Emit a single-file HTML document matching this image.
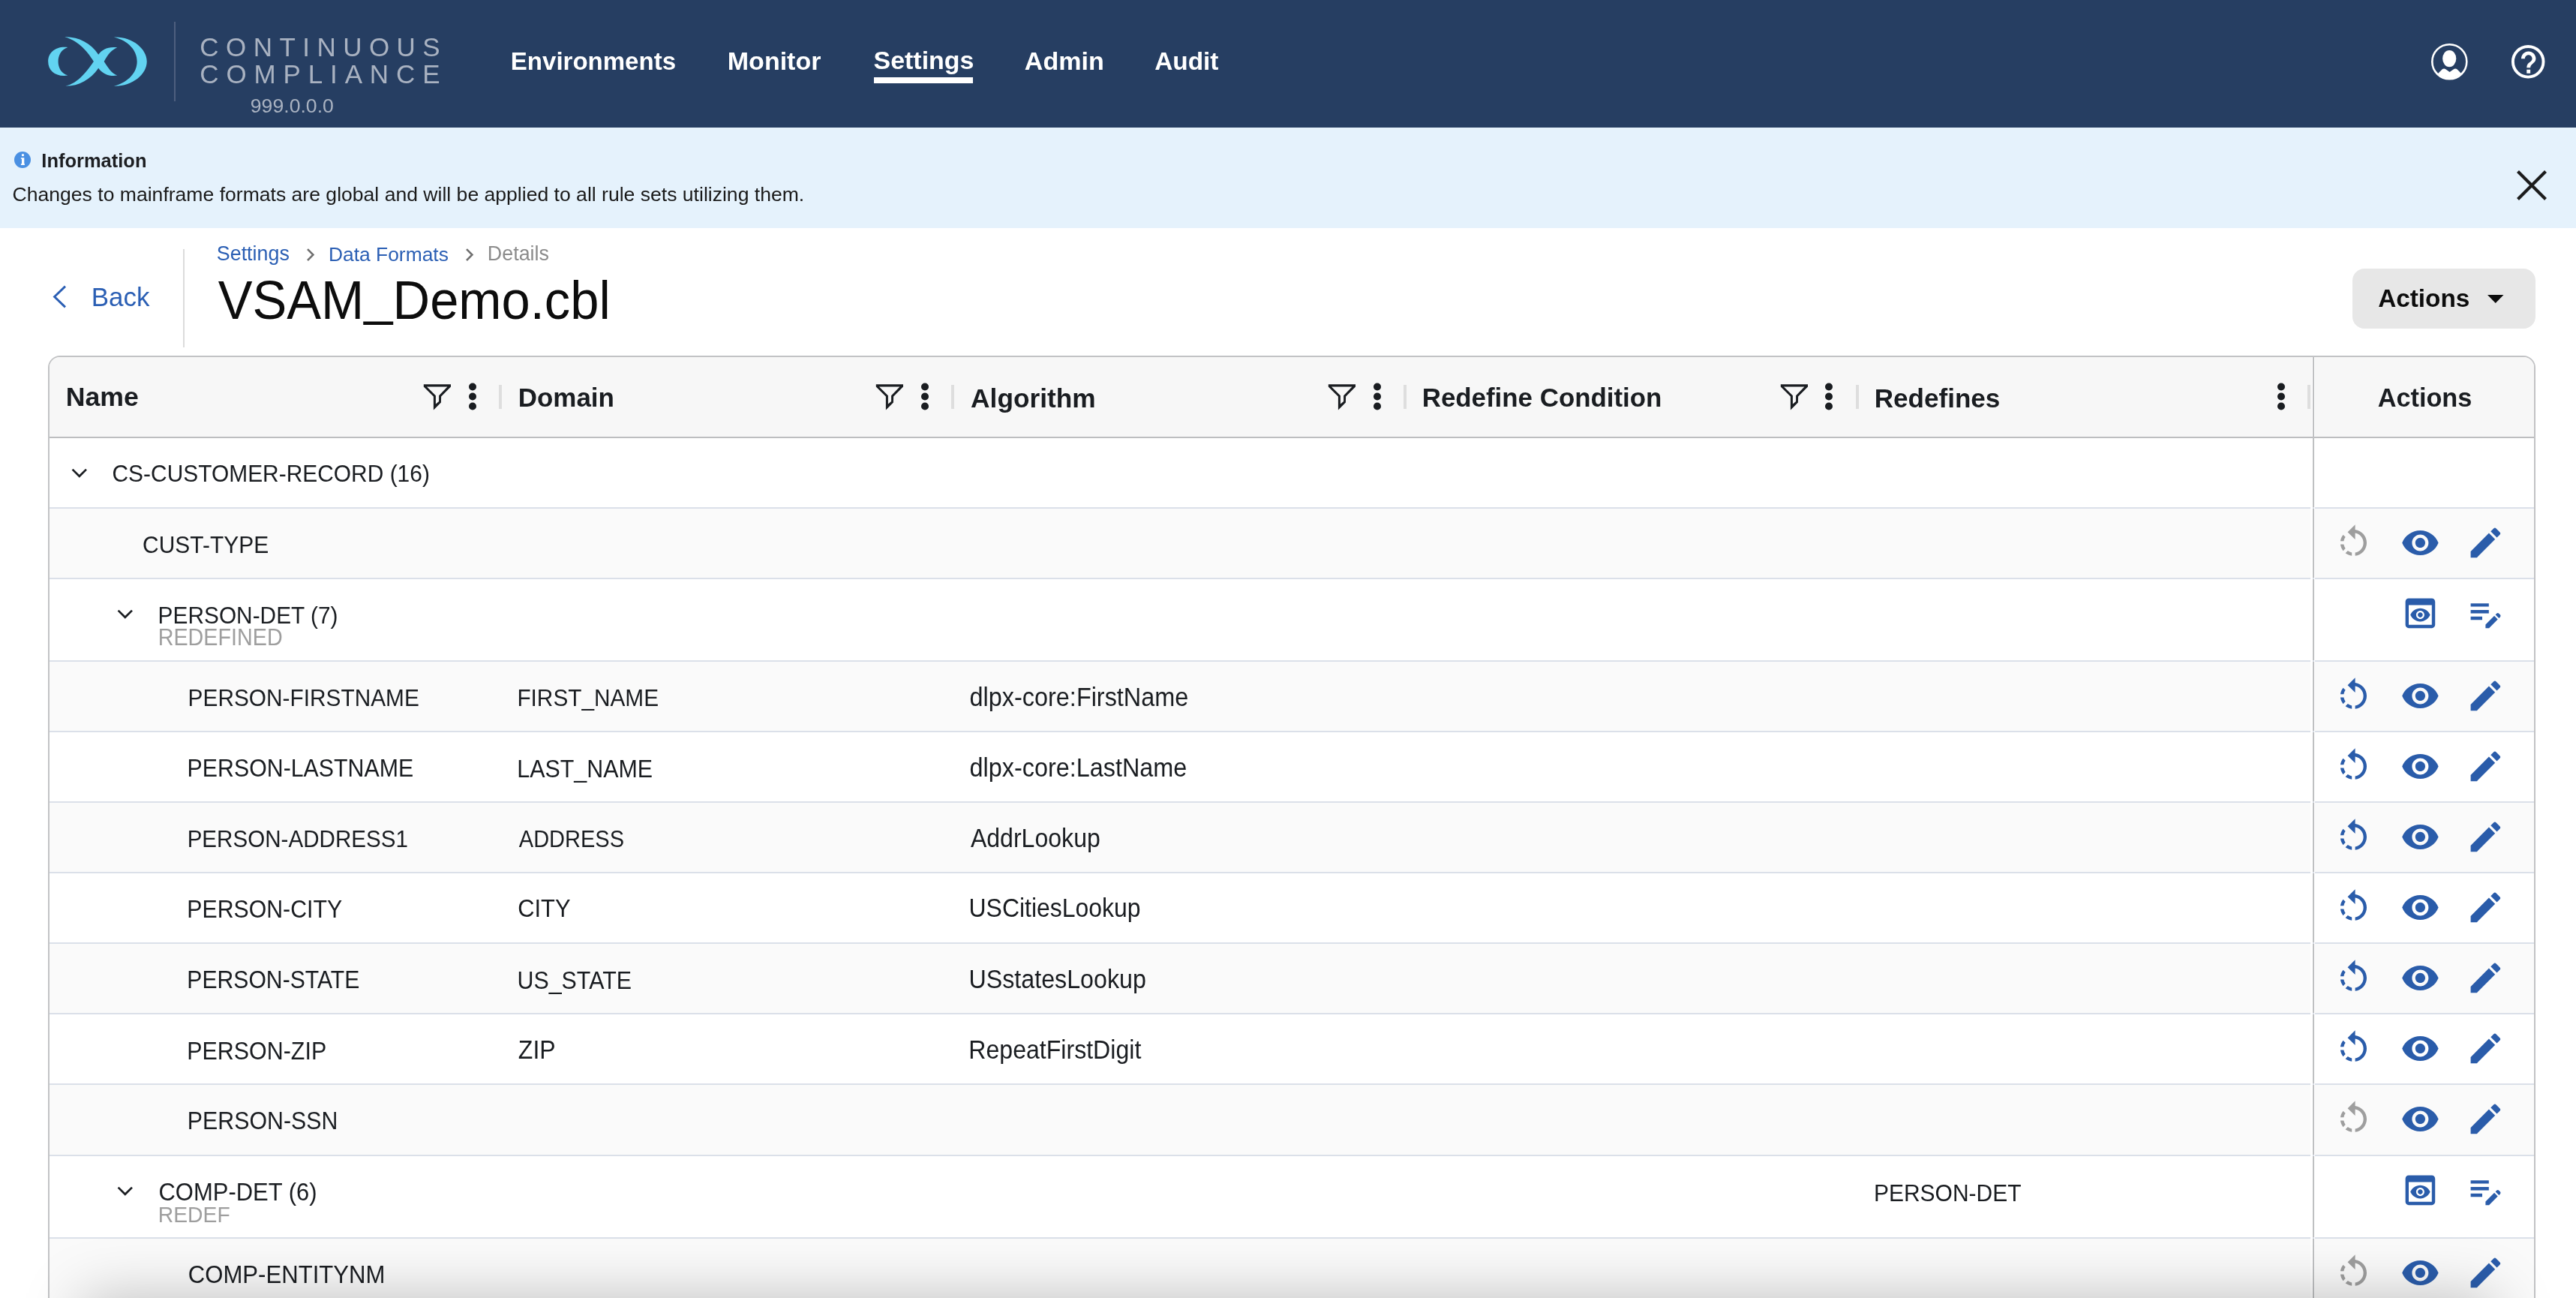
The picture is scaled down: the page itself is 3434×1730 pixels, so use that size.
<!DOCTYPE html>
<html><head><meta charset="utf-8"><style>
html,body{margin:0;padding:0;background:#fff;overflow:hidden;}
@media (max-width:2000px){#root{zoom:0.5;}}
#root{position:relative;will-change:transform;-webkit-font-smoothing:antialiased;width:3434px;height:1730px;overflow:hidden;background:#fff;font-family:"Liberation Sans",sans-serif;}
.t{position:absolute;white-space:nowrap;}
</style></head><body><div id="root">
<div style="position:absolute;left:0px;top:0px;width:3434px;height:170px;background:#263e62"></div>
<svg style="position:absolute;left:55px;top:40px" width="150" height="85" viewBox="0 0 2291 1298"><g fill="#62d3f1">
<path d="M540,350 C300,320 140,450 140,640 C140,830 300,960 540,925 C400,880 345,760 345,640 C345,520 400,400 540,350 Z"/>
<path d="M1480,145 C1850,130 2150,380 2150,640 C2150,900 1850,1150 1480,1140 C1780,1060 1950,860 1950,640 C1950,420 1780,220 1480,145 Z"/>
</g></svg>
<svg style="position:absolute;left:85px;top:45px" width="80" height="75" viewBox="0 0 1385 1298"><path fill="#62d3f1" d="M20,75 C300,60 620,200 800,480 C880,370 1020,290 1235,318 C1110,360 1010,480 930,640 C1010,760 1100,920 1235,960 C1080,990 900,940 800,790 C620,1060 330,1210 40,1205 C330,1150 570,820 690,640 C580,460 360,160 20,75 Z"/></svg>
<div style="position:absolute;left:232px;top:29px;width:2px;height:106px;background:#4d5f7e"></div>
<div class="t" style="left:266.25px;top:45.37px;font-size:35.00px;line-height:35.00px;color:#a9b2c1;letter-spacing:9.46px;">CONTINUOUS</div>
<div class="t" style="left:266.25px;top:80.87px;font-size:35.00px;line-height:35.00px;color:#a9b2c1;letter-spacing:9.87px;">COMPLIANCE</div>
<div class="t" style="left:333.80px;top:128.44px;font-size:26.65px;line-height:26.65px;color:#a9b2c1;">999.0.0.0</div>
<div class="t" style="left:680.85px;top:65.04px;font-size:33.02px;line-height:33.02px;font-weight:700;color:#fff;">Environments</div>
<div class="t" style="left:969.79px;top:64.19px;font-size:34.03px;line-height:34.03px;font-weight:700;color:#fff;">Monitor</div>
<div class="t" style="left:1164.58px;top:64.29px;font-size:33.91px;line-height:33.91px;font-weight:700;color:#fff;">Settings</div>
<div class="t" style="left:1365.85px;top:64.20px;font-size:34.02px;line-height:34.02px;font-weight:700;color:#fff;">Admin</div>
<div class="t" style="left:1539.17px;top:64.72px;font-size:33.40px;line-height:33.40px;font-weight:700;color:#fff;">Audit</div>
<div style="position:absolute;left:1165px;top:103px;width:132px;height:8px;background:#fff"></div>
<svg style="position:absolute;left:3235px;top:52px" width="60" height="60" viewBox="3235 52 60 60">
<defs><clipPath id="uc"><circle cx="3265.3" cy="82.2" r="22.2"/></clipPath></defs>
<circle cx="3265.3" cy="82.2" r="23" fill="none" stroke="#fff" stroke-width="2.6"/>
<ellipse cx="3265.2" cy="78.1" rx="9.1" ry="11.1" fill="#fff"/>
<path clip-path="url(#uc)" d="M3247,101 L3255.5,92.6 Q3257.9,90.4 3260.3,92.3 L3265.6,96 L3270.9,92.3 Q3273.3,90.4 3275.7,92.6 L3284,101 L3292,112 L3238,112 Z" fill="#fff"/>
</svg>
<svg style="position:absolute;left:3340px;top:52px" width="60" height="60" viewBox="3340 52 60 60">
<circle cx="3370.2" cy="82.3" r="20.3" fill="none" stroke="#fff" stroke-width="3.9"/>
<g transform="translate(3361,68.5) scale(2.43) translate(-8,-6)"><path fill="#fff" d="M11 18h2v-2h-2v2zM12 6c-2.21 0-4 1.79-4 4h2c0-1.1.9-2 2-2s2 .9 2 2c0 2-3 1.75-3 5h2c0-2.250 3-2.5 3-5 0-2.21-1.790-4-4-4z"/></g>
</svg>
<div style="position:absolute;left:0px;top:170px;width:3434px;height:134px;background:#e5f2fc"></div>
<svg style="position:absolute;left:18px;top:201px" width="24" height="24" viewBox="0 0 24 24"><circle cx="12" cy="12" r="11" fill="#4a90e2"/><g transform="translate(-18,-201)" fill="#fff"><rect x="29" y="205.3" width="2.9" height="2.8"/><path d="M27.9,210.3 L32.3,210.3 L32.3,218.3 L32.9,218.3 L32.9,220 L27.9,220 L27.9,218.3 L29,218.3 L29,211.7 L27.9,211.7 Z"/></g></svg>
<div class="t" style="left:55.34px;top:202.42px;font-size:25.49px;line-height:25.49px;font-weight:700;color:#1d1f22;">Information</div>
<div class="t" style="left:16.57px;top:245.81px;font-size:26.57px;line-height:26.57px;color:#1a1a1a;">Changes to mainframe formats are global and will be applied to all rule sets utilizing them.</div>
<svg style="position:absolute;left:3350px;top:222px" width="50" height="50" viewBox="3350 222 50 50"><path d="M3356.5,228.5 L3393.5,265.5 M3393.5,228.5 L3356.5,265.5" stroke="#1c1c1c" stroke-width="4.2" fill="none"/></svg>
<svg style="position:absolute;left:60px;top:375px" width="40" height="42" viewBox="60 375 40 42"><path d="M87,381.6 L72.6,395.5 L87,409.4" stroke="#2b5fb4" stroke-width="2.9" fill="none"/></svg>
<div class="t" style="left:121.70px;top:379.40px;font-size:34.97px;line-height:34.97px;color:#2b5fb4;">Back</div>
<div style="position:absolute;left:243.5px;top:332px;width:2px;height:131px;background:#dcdcdc"></div>
<div class="t" style="left:288.79px;top:325.25px;font-size:26.87px;line-height:26.87px;color:#2b5fb4;">Settings</div>
<div class="t" style="left:437.89px;top:325.62px;font-size:26.43px;line-height:26.43px;color:#2b5fb4;">Data Formats</div>
<div class="t" style="left:649.85px;top:325.25px;font-size:26.87px;line-height:26.87px;color:#8c8c8c;">Details</div>
<svg style="position:absolute;left:403.6px;top:328px" width="20" height="24" viewBox="403.6 328 20 24"><path d="M409.6,332.2 L417.0,339.6 L409.6,347" stroke="#707070" stroke-width="2.6" fill="none"/></svg>
<svg style="position:absolute;left:615.5px;top:328px" width="20" height="24" viewBox="615.5 328 20 24"><path d="M621.5,332.2 L628.9,339.6 L621.5,347" stroke="#707070" stroke-width="2.6" fill="none"/></svg>
<div class="t" style="left:290.66px;top:368.33px;font-size:68.70px;line-height:68.70px;color:#0d0d0d;transform:scaleY(1.04);transform-origin:0 58.17px;">VSAM<span style="position:relative;top:-6.5px">_</span>Demo.cbl</div>
<div style="position:absolute;left:3136px;top:358px;width:244px;height:80px;background:#e7e7e7;border-radius:16px"></div>
<div class="t" style="left:3170.17px;top:380.78px;font-size:33.33px;line-height:33.33px;font-weight:700;color:#0d0d0d;">Actions</div>
<svg style="position:absolute;left:3310px;top:388px" width="34" height="22" viewBox="3310 388 34 22"><path d="M3316,393 L3337.5,393 L3326.75,404 Z" fill="#0d0d0d"/></svg>
<div style="position:absolute;left:64px;top:474px;width:3316px;height:1400px;border:2px solid #c2c3c5;border-radius:16px;box-sizing:border-box;overflow:hidden;background:#fff">
<div style="position:absolute;left:0px;top:0px;width:3316px;height:106px;background:#f7f7f7"></div>
<div style="position:absolute;left:0px;top:106px;width:3316px;height:2px;background:#bdbec0"></div>
<div style="position:absolute;left:0px;top:108px;width:3316px;height:93px;background:#ffffff"></div>
<div style="position:absolute;left:0px;top:201px;width:3316px;height:94px;background:#fafafa"></div>
<div style="position:absolute;left:0px;top:295px;width:3316px;height:110px;background:#ffffff"></div>
<div style="position:absolute;left:0px;top:405px;width:3316px;height:94px;background:#fafafa"></div>
<div style="position:absolute;left:0px;top:499px;width:3316px;height:94px;background:#ffffff"></div>
<div style="position:absolute;left:0px;top:593px;width:3316px;height:94px;background:#fafafa"></div>
<div style="position:absolute;left:0px;top:687px;width:3316px;height:94px;background:#ffffff"></div>
<div style="position:absolute;left:0px;top:781px;width:3316px;height:94px;background:#fafafa"></div>
<div style="position:absolute;left:0px;top:875px;width:3316px;height:94px;background:#ffffff"></div>
<div style="position:absolute;left:0px;top:969px;width:3316px;height:95px;background:#fafafa"></div>
<div style="position:absolute;left:0px;top:1064px;width:3316px;height:110px;background:#ffffff"></div>
<div style="position:absolute;left:0px;top:1174px;width:3316px;height:150px;background:#fafafa"></div>
<div style="position:absolute;left:0px;top:200px;width:3316px;height:2px;background:#dbe0e9"></div>
<div style="position:absolute;left:0px;top:294px;width:3316px;height:2px;background:#dbe0e9"></div>
<div style="position:absolute;left:0px;top:404px;width:3316px;height:2px;background:#dbe0e9"></div>
<div style="position:absolute;left:0px;top:498px;width:3316px;height:2px;background:#dbe0e9"></div>
<div style="position:absolute;left:0px;top:592px;width:3316px;height:2px;background:#dbe0e9"></div>
<div style="position:absolute;left:0px;top:686px;width:3316px;height:2px;background:#dbe0e9"></div>
<div style="position:absolute;left:0px;top:780px;width:3316px;height:2px;background:#dbe0e9"></div>
<div style="position:absolute;left:0px;top:874px;width:3316px;height:2px;background:#dbe0e9"></div>
<div style="position:absolute;left:0px;top:968px;width:3316px;height:2px;background:#dbe0e9"></div>
<div style="position:absolute;left:0px;top:1063px;width:3316px;height:2px;background:#dbe0e9"></div>
<div style="position:absolute;left:0px;top:1173px;width:3316px;height:2px;background:#dbe0e9"></div>
<div style="position:absolute;left:3016px;top:0px;width:1px;height:106px;background:#ffffff"></div>
<div style="position:absolute;left:3019px;top:0px;width:1px;height:106px;background:#ffffff"></div>
<div style="position:absolute;left:3017px;top:0px;width:2px;height:108px;background:#bfc0c2"></div>
<div style="position:absolute;left:3014px;top:108px;width:3px;height:1400px;background:#ffffff"></div>
<div style="position:absolute;left:3019px;top:108px;width:1px;height:1400px;background:#ffffff"></div>
<div style="position:absolute;left:3017px;top:108px;width:2px;height:91.5px;background:#bfc0c2"></div>
<div style="position:absolute;left:3017px;top:202px;width:2px;height:91.5px;background:#bfc0c2"></div>
<div style="position:absolute;left:3017px;top:296px;width:2px;height:107.5px;background:#bfc0c2"></div>
<div style="position:absolute;left:3017px;top:406px;width:2px;height:91.5px;background:#bfc0c2"></div>
<div style="position:absolute;left:3017px;top:500px;width:2px;height:91.5px;background:#bfc0c2"></div>
<div style="position:absolute;left:3017px;top:594px;width:2px;height:91.5px;background:#bfc0c2"></div>
<div style="position:absolute;left:3017px;top:688px;width:2px;height:91.5px;background:#bfc0c2"></div>
<div style="position:absolute;left:3017px;top:782px;width:2px;height:91.5px;background:#bfc0c2"></div>
<div style="position:absolute;left:3017px;top:876px;width:2px;height:91.5px;background:#bfc0c2"></div>
<div style="position:absolute;left:3017px;top:970px;width:2px;height:92.5px;background:#bfc0c2"></div>
<div style="position:absolute;left:3017px;top:1065px;width:2px;height:107.5px;background:#bfc0c2"></div>
<div style="position:absolute;left:3017px;top:1175px;width:2px;height:149px;background:#bfc0c2"></div>
</div>
<div class="t" style="left:87.68px;top:512.28px;font-size:35.70px;line-height:35.70px;font-weight:700;color:#1a1d21;">Name</div>
<svg style="position:absolute;left:557.4px;top:505px" width="50" height="50" viewBox="557.4 505 50 50"><path fill-rule="evenodd" fill="#1a1d21" d="M565.2,512.3 L601.4,512.3 L601.4,515.5 L588.5,528.6 L588.3,536.4 L578.3,546.6 L578.3,528.6 L565.2,515.5 Z M569.4,515.5 L596.8,515.5 L585.5,527.3 L585.5,535.0 L581.3,538.6 L581.3,527.3 Z"/></svg>
<svg style="position:absolute;left:624.1px;top:509px" width="12" height="40" viewBox="0 0 12 40"><circle cx="6" cy="6.5" r="5" fill="#1a1d21"/><circle cx="6" cy="19.5" r="5" fill="#1a1d21"/><circle cx="6" cy="32.5" r="5" fill="#1a1d21"/></svg>
<div style="position:absolute;left:665.4px;top:513px;width:4px;height:32px;background:#dedede"></div>
<div class="t" style="left:690.73px;top:512.89px;font-size:34.97px;line-height:34.97px;font-weight:700;color:#1a1d21;">Domain</div>
<svg style="position:absolute;left:1160.1px;top:505px" width="50" height="50" viewBox="1160.1 505 50 50"><path fill-rule="evenodd" fill="#1a1d21" d="M1167.9,512.3 L1204.1,512.3 L1204.1,515.5 L1191.2,528.6 L1191.0,536.4 L1181.0,546.6 L1181.0,528.6 L1167.9,515.5 Z M1172.1,515.5 L1199.5,515.5 L1188.2,527.3 L1188.2,535.0 L1184.0,538.6 L1184.0,527.3 Z"/></svg>
<svg style="position:absolute;left:1226.8px;top:509px" width="12" height="40" viewBox="0 0 12 40"><circle cx="6" cy="6.5" r="5" fill="#1a1d21"/><circle cx="6" cy="19.5" r="5" fill="#1a1d21"/><circle cx="6" cy="32.5" r="5" fill="#1a1d21"/></svg>
<div style="position:absolute;left:1268.1px;top:513px;width:4px;height:32px;background:#dedede"></div>
<div class="t" style="left:1294.12px;top:512.63px;font-size:35.28px;line-height:35.28px;font-weight:700;color:#1a1d21;">Algorithm</div>
<svg style="position:absolute;left:1762.8px;top:505px" width="50" height="50" viewBox="1762.8 505 50 50"><path fill-rule="evenodd" fill="#1a1d21" d="M1770.6,512.3 L1806.8,512.3 L1806.8,515.5 L1793.9,528.6 L1793.7,536.4 L1783.7,546.6 L1783.7,528.6 L1770.6,515.5 Z M1774.8,515.5 L1802.2,515.5 L1790.9,527.3 L1790.9,535.0 L1786.7,538.6 L1786.7,527.3 Z"/></svg>
<svg style="position:absolute;left:1829.5px;top:509px" width="12" height="40" viewBox="0 0 12 40"><circle cx="6" cy="6.5" r="5" fill="#1a1d21"/><circle cx="6" cy="19.5" r="5" fill="#1a1d21"/><circle cx="6" cy="32.5" r="5" fill="#1a1d21"/></svg>
<div style="position:absolute;left:1870.8px;top:513px;width:4px;height:32px;background:#dedede"></div>
<div class="t" style="left:1895.73px;top:512.96px;font-size:34.89px;line-height:34.89px;font-weight:700;color:#1a1d21;">Redefine Condition</div>
<svg style="position:absolute;left:2365.5px;top:505px" width="50" height="50" viewBox="2365.5 505 50 50"><path fill-rule="evenodd" fill="#1a1d21" d="M2373.3,512.3 L2409.5,512.3 L2409.5,515.5 L2396.6,528.6 L2396.4,536.4 L2386.4,546.6 L2386.4,528.6 L2373.3,515.5 Z M2377.5,515.5 L2404.9,515.5 L2393.6,527.3 L2393.6,535.0 L2389.4,538.6 L2389.4,527.3 Z"/></svg>
<svg style="position:absolute;left:2432.2px;top:509px" width="12" height="40" viewBox="0 0 12 40"><circle cx="6" cy="6.5" r="5" fill="#1a1d21"/><circle cx="6" cy="19.5" r="5" fill="#1a1d21"/><circle cx="6" cy="32.5" r="5" fill="#1a1d21"/></svg>
<div style="position:absolute;left:2473.5px;top:513px;width:4px;height:32px;background:#dedede"></div>
<div class="t" style="left:2498.72px;top:512.80px;font-size:35.08px;line-height:35.08px;font-weight:700;color:#1a1d21;">Redefines</div>
<svg style="position:absolute;left:3034.9px;top:509px" width="12" height="40" viewBox="0 0 12 40"><circle cx="6" cy="6.5" r="5" fill="#1a1d21"/><circle cx="6" cy="19.5" r="5" fill="#1a1d21"/><circle cx="6" cy="32.5" r="5" fill="#1a1d21"/></svg>
<div style="position:absolute;left:3076.2px;top:513px;width:4px;height:32px;background:#dedede"></div>
<div class="t" style="left:3169.64px;top:513.45px;font-size:34.31px;line-height:34.31px;font-weight:700;color:#1a1d21;">Actions</div>
<svg style="position:absolute;left:92px;top:621px" width="28" height="20" viewBox="0 0 28 20"><path d="M4.6,4.6 L13.8,13.8 L23.0,4.6" fill="none" stroke="#1a1d21" stroke-width="2.7"/></svg>
<div class="t" style="left:149.50px;top:616.66px;font-size:29.93px;line-height:29.93px;color:#1a1d21;transform:scaleY(1.07);transform-origin:0 25.34px;">CS-CUSTOMER-RECORD (16)</div>
<div class="t" style="left:190.00px;top:712.11px;font-size:29.98px;line-height:29.98px;color:#1a1d21;transform:scaleY(1.07);transform-origin:0 25.39px;">CUST-TYPE</div>
<svg style="position:absolute;left:3111.0px;top:697.0px" width="52.8" height="52.8" viewBox="0 0 24 24"><path fill="#9e9e9e" d="M7.11 8.53 5.7 7.11C4.8 8.27 4.24 9.61 4.07 11h2.02c.14-.87.49-1.72 1.02-2.470zM6.09 13H4.07c.17 1.39.72 2.73 1.62 3.89l1.41-1.42c-.52-.75-.87-1.59-1.01-2.47zm1.01 5.32c1.16.9 2.51 1.44 3.9 1.61V17.9c-.87-.15-1.71-.49-2.46-1.03L7.1 18.32zM13 4.07V1L8.45 5.55 13 10V6.09c2.84.48 5 2.94 5 5.91s-2.16 5.43-5 5.91v2.02c3.95-.49 7-3.850 7-7.93s-3.05-7.44-7-7.93z"/></svg>
<svg style="position:absolute;left:3199.5px;top:697.0px" width="52.8" height="52.8" viewBox="0 0 24 24"><path fill="#2a5caa" d="M12 4.5C7 4.5 2.73 7.61 1 12c1.73 4.39 6 7.5 11 7.5s9.27-3.11 11-7.5c-1.73-4.39-6-7.5-11-7.5zM12 17c-2.76 0-5-2.240-5-5s2.24-5 5-5 5 2.24 5 5-2.24 5-5 5zm0-8c-1.66 0-3 1.34-3 3s1.34 3 3 3 3-1.34 3-3-1.34-3-3-3z"/></svg>
<svg style="position:absolute;left:3287.3px;top:697.0px" width="52.8" height="52.8" viewBox="0 0 24 24"><path fill="#2a5caa" d="M3 17.25V21h3.75L17.81 9.94l-3.75-3.75L3 17.25zM20.71 7.04c.39-.39.39-1.02 0-1.41l-2.34-2.34c-.39-.39-1.02-.39-1.41 0l-1.83 1.83 3.75 3.75 1.83-1.830z"/></svg>
<div class="t" style="left:250.61px;top:916.23px;font-size:29.84px;line-height:29.84px;color:#1a1d21;transform:scaleY(1.07);transform-origin:0 25.27px;">PERSON-FIRSTNAME</div>
<div class="t" style="left:689.42px;top:916.28px;font-size:29.79px;line-height:29.79px;color:#1a1d21;transform:scaleY(1.07);transform-origin:0 25.22px;">FIRST_NAME</div>
<div class="t" style="left:1292.60px;top:914.05px;font-size:32.42px;line-height:32.42px;color:#1a1d21;transform:scaleY(1.07);transform-origin:0 27.45px;">dlpx-core:FirstName</div>
<svg style="position:absolute;left:3111.0px;top:901.0px" width="52.8" height="52.8" viewBox="0 0 24 24"><path fill="#2a5caa" d="M7.11 8.53 5.7 7.11C4.8 8.27 4.24 9.61 4.07 11h2.02c.14-.87.49-1.72 1.02-2.470zM6.09 13H4.07c.17 1.39.72 2.73 1.62 3.89l1.41-1.42c-.52-.75-.87-1.59-1.01-2.47zm1.01 5.32c1.16.9 2.51 1.44 3.9 1.61V17.9c-.87-.15-1.71-.49-2.46-1.03L7.1 18.32zM13 4.07V1L8.45 5.55 13 10V6.09c2.84.48 5 2.94 5 5.91s-2.16 5.43-5 5.91v2.02c3.95-.49 7-3.850 7-7.93s-3.05-7.44-7-7.93z"/></svg>
<svg style="position:absolute;left:3199.5px;top:901.0px" width="52.8" height="52.8" viewBox="0 0 24 24"><path fill="#2a5caa" d="M12 4.5C7 4.5 2.73 7.61 1 12c1.73 4.39 6 7.5 11 7.5s9.27-3.11 11-7.5c-1.73-4.39-6-7.5-11-7.5zM12 17c-2.76 0-5-2.240-5-5s2.24-5 5-5 5 2.24 5 5-2.24 5-5 5zm0-8c-1.66 0-3 1.34-3 3s1.34 3 3 3 3-1.34 3-3-1.34-3-3-3z"/></svg>
<svg style="position:absolute;left:3287.3px;top:901.0px" width="52.8" height="52.8" viewBox="0 0 24 24"><path fill="#2a5caa" d="M3 17.25V21h3.75L17.81 9.94l-3.75-3.75L3 17.25zM20.71 7.04c.39-.39.39-1.02 0-1.41l-2.34-2.34c-.39-.39-1.02-.39-1.41 0l-1.83 1.83 3.75 3.75 1.83-1.830z"/></svg>
<div class="t" style="left:249.57px;top:1009.82px;font-size:30.33px;line-height:30.33px;color:#1a1d21;transform:scaleY(1.07);transform-origin:0 25.68px;">PERSON-LASTNAME</div>
<div class="t" style="left:689.37px;top:1009.77px;font-size:30.39px;line-height:30.39px;color:#1a1d21;transform:scaleY(1.07);transform-origin:0 25.73px;">LAST_NAME</div>
<div class="t" style="left:1292.60px;top:1008.07px;font-size:32.39px;line-height:32.39px;color:#1a1d21;transform:scaleY(1.07);transform-origin:0 27.43px;">dlpx-core:LastName</div>
<svg style="position:absolute;left:3111.0px;top:995.0px" width="52.8" height="52.8" viewBox="0 0 24 24"><path fill="#2a5caa" d="M7.11 8.53 5.7 7.11C4.8 8.27 4.24 9.61 4.07 11h2.02c.14-.87.49-1.72 1.02-2.470zM6.09 13H4.07c.17 1.39.72 2.73 1.62 3.89l1.41-1.42c-.52-.75-.87-1.59-1.01-2.47zm1.01 5.32c1.16.9 2.51 1.44 3.9 1.61V17.9c-.87-.15-1.71-.49-2.46-1.03L7.1 18.32zM13 4.07V1L8.45 5.55 13 10V6.09c2.84.48 5 2.94 5 5.91s-2.16 5.43-5 5.91v2.02c3.95-.49 7-3.850 7-7.93s-3.05-7.44-7-7.93z"/></svg>
<svg style="position:absolute;left:3199.5px;top:995.0px" width="52.8" height="52.8" viewBox="0 0 24 24"><path fill="#2a5caa" d="M12 4.5C7 4.5 2.73 7.61 1 12c1.73 4.39 6 7.5 11 7.5s9.27-3.11 11-7.5c-1.73-4.39-6-7.5-11-7.5zM12 17c-2.76 0-5-2.240-5-5s2.24-5 5-5 5 2.24 5 5-2.24 5-5 5zm0-8c-1.66 0-3 1.34-3 3s1.34 3 3 3 3-1.34 3-3-1.34-3-3-3z"/></svg>
<svg style="position:absolute;left:3287.3px;top:995.0px" width="52.8" height="52.8" viewBox="0 0 24 24"><path fill="#2a5caa" d="M3 17.25V21h3.75L17.81 9.94l-3.75-3.75L3 17.25zM20.71 7.04c.39-.39.39-1.02 0-1.41l-2.34-2.34c-.39-.39-1.02-.39-1.41 0l-1.83 1.83 3.75 3.75 1.83-1.830z"/></svg>
<div class="t" style="left:249.63px;top:1104.44px;font-size:29.60px;line-height:29.60px;color:#1a1d21;transform:scaleY(1.07);transform-origin:0 25.06px;">PERSON-ADDRESS1</div>
<div class="t" style="left:691.80px;top:1104.93px;font-size:29.02px;line-height:29.02px;color:#1a1d21;transform:scaleY(1.07);transform-origin:0 24.57px;">ADDRESS</div>
<div class="t" style="left:1293.90px;top:1102.34px;font-size:32.07px;line-height:32.07px;color:#1a1d21;transform:scaleY(1.07);transform-origin:0 27.16px;">AddrLookup</div>
<svg style="position:absolute;left:3111.0px;top:1089.0px" width="52.8" height="52.8" viewBox="0 0 24 24"><path fill="#2a5caa" d="M7.11 8.53 5.7 7.11C4.8 8.27 4.24 9.61 4.07 11h2.02c.14-.87.49-1.72 1.02-2.470zM6.09 13H4.07c.17 1.39.72 2.73 1.62 3.89l1.41-1.42c-.52-.75-.87-1.59-1.01-2.47zm1.01 5.32c1.16.9 2.51 1.44 3.9 1.61V17.9c-.87-.15-1.71-.49-2.46-1.03L7.1 18.32zM13 4.07V1L8.45 5.55 13 10V6.09c2.84.48 5 2.94 5 5.91s-2.16 5.43-5 5.91v2.02c3.95-.49 7-3.850 7-7.93s-3.05-7.44-7-7.93z"/></svg>
<svg style="position:absolute;left:3199.5px;top:1089.0px" width="52.8" height="52.8" viewBox="0 0 24 24"><path fill="#2a5caa" d="M12 4.5C7 4.5 2.73 7.61 1 12c1.73 4.39 6 7.5 11 7.5s9.27-3.11 11-7.5c-1.73-4.39-6-7.5-11-7.5zM12 17c-2.76 0-5-2.240-5-5s2.24-5 5-5 5 2.24 5 5-2.24 5-5 5zm0-8c-1.66 0-3 1.34-3 3s1.34 3 3 3 3-1.34 3-3-1.34-3-3-3z"/></svg>
<svg style="position:absolute;left:3287.3px;top:1089.0px" width="52.8" height="52.8" viewBox="0 0 24 24"><path fill="#2a5caa" d="M3 17.25V21h3.75L17.81 9.94l-3.75-3.75L3 17.25zM20.71 7.04c.39-.39.39-1.02 0-1.41l-2.34-2.34c-.39-.39-1.02-.39-1.41 0l-1.83 1.83 3.75 3.75 1.83-1.830z"/></svg>
<div class="t" style="left:249.28px;top:1197.86px;font-size:30.28px;line-height:30.28px;color:#1a1d21;transform:scaleY(1.07);transform-origin:0 25.64px;">PERSON-CITY</div>
<div class="t" style="left:690.26px;top:1197.39px;font-size:30.84px;line-height:30.84px;color:#1a1d21;transform:scaleY(1.07);transform-origin:0 26.11px;">CITY</div>
<div class="t" style="left:1291.50px;top:1196.44px;font-size:31.96px;line-height:31.96px;color:#1a1d21;transform:scaleY(1.07);transform-origin:0 27.06px;">USCitiesLookup</div>
<svg style="position:absolute;left:3111.0px;top:1183.0px" width="52.8" height="52.8" viewBox="0 0 24 24"><path fill="#2a5caa" d="M7.11 8.53 5.7 7.11C4.8 8.27 4.24 9.61 4.07 11h2.02c.14-.87.49-1.72 1.02-2.470zM6.09 13H4.07c.17 1.39.72 2.73 1.62 3.89l1.41-1.42c-.52-.75-.87-1.59-1.01-2.47zm1.01 5.32c1.16.9 2.51 1.44 3.9 1.61V17.9c-.87-.15-1.71-.49-2.46-1.03L7.1 18.32zM13 4.07V1L8.45 5.55 13 10V6.09c2.84.48 5 2.94 5 5.91s-2.16 5.43-5 5.91v2.02c3.95-.49 7-3.850 7-7.93s-3.05-7.44-7-7.93z"/></svg>
<svg style="position:absolute;left:3199.5px;top:1183.0px" width="52.8" height="52.8" viewBox="0 0 24 24"><path fill="#2a5caa" d="M12 4.5C7 4.5 2.73 7.61 1 12c1.73 4.39 6 7.5 11 7.5s9.27-3.11 11-7.5c-1.73-4.39-6-7.5-11-7.5zM12 17c-2.76 0-5-2.240-5-5s2.24-5 5-5 5 2.24 5 5-2.24 5-5 5zm0-8c-1.66 0-3 1.34-3 3s1.34 3 3 3 3-1.34 3-3-1.34-3-3-3z"/></svg>
<svg style="position:absolute;left:3287.3px;top:1183.0px" width="52.8" height="52.8" viewBox="0 0 24 24"><path fill="#2a5caa" d="M3 17.25V21h3.75L17.81 9.94l-3.75-3.75L3 17.25zM20.71 7.04c.39-.39.39-1.02 0-1.41l-2.34-2.34c-.39-.39-1.02-.39-1.41 0l-1.83 1.83 3.75 3.75 1.83-1.830z"/></svg>
<div class="t" style="left:249.29px;top:1291.95px;font-size:30.17px;line-height:30.17px;color:#1a1d21;transform:scaleY(1.07);transform-origin:0 25.55px;">PERSON-STATE</div>
<div class="t" style="left:689.52px;top:1291.78px;font-size:30.38px;line-height:30.38px;color:#1a1d21;transform:scaleY(1.07);transform-origin:0 25.72px;">US_STATE</div>
<div class="t" style="left:1291.48px;top:1290.22px;font-size:32.22px;line-height:32.22px;color:#1a1d21;transform:scaleY(1.07);transform-origin:0 27.28px;">USstatesLookup</div>
<svg style="position:absolute;left:3111.0px;top:1277.0px" width="52.8" height="52.8" viewBox="0 0 24 24"><path fill="#2a5caa" d="M7.11 8.53 5.7 7.11C4.8 8.27 4.24 9.61 4.07 11h2.02c.14-.87.49-1.72 1.02-2.470zM6.09 13H4.07c.17 1.39.72 2.73 1.62 3.89l1.41-1.42c-.52-.75-.87-1.59-1.01-2.47zm1.01 5.32c1.16.9 2.51 1.44 3.9 1.61V17.9c-.87-.15-1.71-.49-2.46-1.03L7.1 18.32zM13 4.07V1L8.45 5.55 13 10V6.09c2.84.48 5 2.94 5 5.91s-2.16 5.43-5 5.91v2.02c3.95-.49 7-3.850 7-7.93s-3.05-7.44-7-7.93z"/></svg>
<svg style="position:absolute;left:3199.5px;top:1277.0px" width="52.8" height="52.8" viewBox="0 0 24 24"><path fill="#2a5caa" d="M12 4.5C7 4.5 2.73 7.61 1 12c1.73 4.39 6 7.5 11 7.5s9.27-3.11 11-7.5c-1.73-4.39-6-7.5-11-7.5zM12 17c-2.76 0-5-2.240-5-5s2.24-5 5-5 5 2.24 5 5-2.24 5-5 5zm0-8c-1.66 0-3 1.34-3 3s1.34 3 3 3 3-1.34 3-3-1.34-3-3-3z"/></svg>
<svg style="position:absolute;left:3287.3px;top:1277.0px" width="52.8" height="52.8" viewBox="0 0 24 24"><path fill="#2a5caa" d="M3 17.25V21h3.75L17.81 9.94l-3.75-3.75L3 17.25zM20.71 7.04c.39-.39.39-1.02 0-1.41l-2.34-2.34c-.39-.39-1.02-.39-1.41 0l-1.83 1.83 3.75 3.75 1.83-1.830z"/></svg>
<div class="t" style="left:249.27px;top:1385.73px;font-size:30.43px;line-height:30.43px;color:#1a1d21;transform:scaleY(1.07);transform-origin:0 25.77px;">PERSON-ZIP</div>
<div class="t" style="left:690.84px;top:1384.35px;font-size:32.07px;line-height:32.07px;color:#1a1d21;transform:scaleY(1.07);transform-origin:0 27.15px;">ZIP</div>
<div class="t" style="left:1291.33px;top:1384.33px;font-size:32.09px;line-height:32.09px;color:#1a1d21;transform:scaleY(1.07);transform-origin:0 27.17px;">RepeatFirstDigit</div>
<svg style="position:absolute;left:3111.0px;top:1371.0px" width="52.8" height="52.8" viewBox="0 0 24 24"><path fill="#2a5caa" d="M7.11 8.53 5.7 7.11C4.8 8.27 4.24 9.61 4.07 11h2.02c.14-.87.49-1.72 1.02-2.470zM6.09 13H4.07c.17 1.39.72 2.73 1.62 3.89l1.41-1.42c-.52-.75-.87-1.59-1.01-2.47zm1.01 5.32c1.16.9 2.51 1.44 3.9 1.61V17.9c-.87-.15-1.71-.49-2.46-1.03L7.1 18.32zM13 4.07V1L8.45 5.55 13 10V6.09c2.84.48 5 2.94 5 5.91s-2.16 5.43-5 5.91v2.02c3.95-.49 7-3.850 7-7.93s-3.05-7.44-7-7.93z"/></svg>
<svg style="position:absolute;left:3199.5px;top:1371.0px" width="52.8" height="52.8" viewBox="0 0 24 24"><path fill="#2a5caa" d="M12 4.5C7 4.5 2.73 7.61 1 12c1.73 4.39 6 7.5 11 7.5s9.27-3.11 11-7.5c-1.73-4.39-6-7.5-11-7.5zM12 17c-2.76 0-5-2.240-5-5s2.24-5 5-5 5 2.24 5 5-2.24 5-5 5zm0-8c-1.66 0-3 1.34-3 3s1.34 3 3 3 3-1.34 3-3-1.34-3-3-3z"/></svg>
<svg style="position:absolute;left:3287.3px;top:1371.0px" width="52.8" height="52.8" viewBox="0 0 24 24"><path fill="#2a5caa" d="M3 17.25V21h3.75L17.81 9.94l-3.75-3.75L3 17.25zM20.71 7.04c.39-.39.39-1.02 0-1.41l-2.34-2.34c-.39-.39-1.02-.39-1.41 0l-1.83 1.83 3.75 3.75 1.83-1.830z"/></svg>
<div class="t" style="left:249.87px;top:1479.81px;font-size:30.34px;line-height:30.34px;color:#1a1d21;transform:scaleY(1.07);transform-origin:0 25.69px;">PERSON-SSN</div>
<svg style="position:absolute;left:3111.0px;top:1465.0px" width="52.8" height="52.8" viewBox="0 0 24 24"><path fill="#9e9e9e" d="M7.11 8.53 5.7 7.11C4.8 8.27 4.24 9.61 4.07 11h2.02c.14-.87.49-1.72 1.02-2.470zM6.09 13H4.07c.17 1.39.72 2.73 1.62 3.89l1.41-1.42c-.52-.75-.87-1.59-1.01-2.47zm1.01 5.32c1.16.9 2.51 1.44 3.9 1.61V17.9c-.87-.15-1.71-.49-2.46-1.03L7.1 18.32zM13 4.07V1L8.45 5.55 13 10V6.09c2.84.48 5 2.94 5 5.91s-2.16 5.43-5 5.91v2.02c3.95-.49 7-3.850 7-7.93s-3.05-7.44-7-7.93z"/></svg>
<svg style="position:absolute;left:3199.5px;top:1465.0px" width="52.8" height="52.8" viewBox="0 0 24 24"><path fill="#2a5caa" d="M12 4.5C7 4.5 2.73 7.61 1 12c1.73 4.39 6 7.5 11 7.5s9.27-3.11 11-7.5c-1.73-4.39-6-7.5-11-7.5zM12 17c-2.76 0-5-2.240-5-5s2.24-5 5-5 5 2.24 5 5-2.24 5-5 5zm0-8c-1.66 0-3 1.34-3 3s1.34 3 3 3 3-1.34 3-3-1.34-3-3-3z"/></svg>
<svg style="position:absolute;left:3287.3px;top:1465.0px" width="52.8" height="52.8" viewBox="0 0 24 24"><path fill="#2a5caa" d="M3 17.25V21h3.75L17.81 9.94l-3.75-3.75L3 17.25zM20.71 7.04c.39-.39.39-1.02 0-1.41l-2.34-2.34c-.39-.39-1.02-.39-1.41 0l-1.83 1.83 3.75 3.75 1.83-1.830z"/></svg>
<div class="t" style="left:250.74px;top:1684.16px;font-size:31.11px;line-height:31.11px;color:#1a1d21;transform:scaleY(1.07);transform-origin:0 26.34px;">COMP-ENTITYNM</div>
<svg style="position:absolute;left:3111.0px;top:1670.0px" width="52.8" height="52.8" viewBox="0 0 24 24"><path fill="#9e9e9e" d="M7.11 8.53 5.7 7.11C4.8 8.27 4.24 9.61 4.07 11h2.02c.14-.87.49-1.72 1.02-2.470zM6.09 13H4.07c.17 1.39.72 2.73 1.62 3.89l1.41-1.42c-.52-.75-.87-1.59-1.01-2.47zm1.01 5.32c1.16.9 2.51 1.44 3.9 1.61V17.9c-.87-.15-1.71-.49-2.46-1.03L7.1 18.32zM13 4.07V1L8.45 5.55 13 10V6.09c2.84.48 5 2.94 5 5.91s-2.16 5.43-5 5.91v2.02c3.95-.49 7-3.850 7-7.93s-3.05-7.44-7-7.93z"/></svg>
<svg style="position:absolute;left:3199.5px;top:1670.0px" width="52.8" height="52.8" viewBox="0 0 24 24"><path fill="#2a5caa" d="M12 4.5C7 4.5 2.73 7.61 1 12c1.73 4.39 6 7.5 11 7.5s9.27-3.11 11-7.5c-1.73-4.39-6-7.5-11-7.5zM12 17c-2.76 0-5-2.240-5-5s2.24-5 5-5 5 2.24 5 5-2.24 5-5 5zm0-8c-1.66 0-3 1.34-3 3s1.34 3 3 3 3-1.34 3-3-1.34-3-3-3z"/></svg>
<svg style="position:absolute;left:3287.3px;top:1670.0px" width="52.8" height="52.8" viewBox="0 0 24 24"><path fill="#2a5caa" d="M3 17.25V21h3.75L17.81 9.94l-3.75-3.75L3 17.25zM20.71 7.04c.39-.39.39-1.02 0-1.41l-2.34-2.34c-.39-.39-1.02-.39-1.41 0l-1.83 1.83 3.75 3.75 1.83-1.830z"/></svg>
<svg style="position:absolute;left:153px;top:809px" width="28" height="20" viewBox="0 0 28 20"><path d="M4.6,4.6 L13.8,13.8 L23.0,4.6" fill="none" stroke="#1a1d21" stroke-width="2.7"/></svg>
<div class="t" style="left:210.61px;top:806.32px;font-size:29.85px;line-height:29.85px;color:#1a1d21;transform:scaleY(1.07);transform-origin:0 25.28px;">PERSON-DET (7)</div>
<div class="t" style="left:210.70px;top:836.06px;font-size:28.74px;line-height:28.74px;color:#9e9e9e;transform:scaleY(1.07);transform-origin:0 24.34px;">REDEFINED</div>
<svg style="position:absolute;left:3199.5px;top:791.0px" width="52.8" height="52.8" viewBox="0 0 24 24"><path fill="#2a5caa" d="M19 3H5c-1.11 0-2 .9-2 2v14c0 1.1.89 2 2 2h14c1.1 0 2-.89 2-2V5c0-1.1-.89-2-2-2zm0 16H5V7h14v12zm-5.5-6c0 .83-.67 1.5-1.5 1.5s-1.5-.67-1.5-1.5.67-1.5 1.5-1.5 1.5.67 1.5 1.5zM12 9c-2.73 0-5.06 1.66-6 4 .94 2.34 3.27 4 6 4s5.06-1.66 6-4c-.94-2.34-3.27-4-6-4zm0 6.5c-1.38 0-2.5-1.12-2.5-2.5s1.12-2.5 2.5-2.5 2.5 1.12 2.5 2.5-1.12 2.5-2.5 2.5z"/></svg>
<svg style="position:absolute;left:3287.3px;top:791.0px" width="52.8" height="52.8" viewBox="0 0 24 24"><path fill="#2a5caa" d="M3 10h11v2H3v-2zm0-2h11V6H3v2zm0 8h7v-2H3v2zm15.01-3.13.71-.71c.39-.39 1.02-.39 1.41 0l.71.71c.39.39.39 1.02 0 1.41l-.71.71-2.12-2.12zm-.71.71-5.3 5.3V21h2.12l5.3-5.3-2.12-2.12z"/></svg>
<svg style="position:absolute;left:153px;top:1578px" width="28" height="20" viewBox="0 0 28 20"><path d="M4.6,4.6 L13.8,13.8 L23.0,4.6" fill="none" stroke="#1a1d21" stroke-width="2.7"/></svg>
<div class="t" style="left:211.45px;top:1574.36px;font-size:30.99px;line-height:30.99px;color:#1a1d21;transform:scaleY(1.07);transform-origin:0 26.24px;">COMP-DET (6)</div>
<div class="t" style="left:210.73px;top:1605.42px;font-size:28.32px;line-height:28.32px;color:#9e9e9e;transform:scaleY(1.07);transform-origin:0 23.98px;">REDEF</div>
<div class="t" style="left:2498.00px;top:1576.12px;font-size:29.98px;line-height:29.98px;color:#1a1d21;transform:scaleY(1.07);transform-origin:0 25.38px;">PERSON-DET</div>
<svg style="position:absolute;left:3199.5px;top:1560.0px" width="52.8" height="52.8" viewBox="0 0 24 24"><path fill="#2a5caa" d="M19 3H5c-1.11 0-2 .9-2 2v14c0 1.1.89 2 2 2h14c1.1 0 2-.89 2-2V5c0-1.1-.89-2-2-2zm0 16H5V7h14v12zm-5.5-6c0 .83-.67 1.5-1.5 1.5s-1.5-.67-1.5-1.5.67-1.5 1.5-1.5 1.5.67 1.5 1.5zM12 9c-2.73 0-5.06 1.66-6 4 .94 2.34 3.27 4 6 4s5.06-1.66 6-4c-.94-2.34-3.27-4-6-4zm0 6.5c-1.38 0-2.5-1.12-2.5-2.5s1.12-2.5 2.5-2.5 2.5 1.12 2.5 2.5-1.12 2.5-2.5 2.5z"/></svg>
<svg style="position:absolute;left:3287.3px;top:1560.0px" width="52.8" height="52.8" viewBox="0 0 24 24"><path fill="#2a5caa" d="M3 10h11v2H3v-2zm0-2h11V6H3v2zm0 8h7v-2H3v2zm15.01-3.13.71-.71c.39-.39 1.02-.39 1.41 0l.71.71c.39.39.39 1.02 0 1.41l-.71.71-2.12-2.12zm-.71.71-5.3 5.3V21h2.12l5.3-5.3-2.12-2.12z"/></svg>
<div style="position:absolute;left:110px;top:1732px;width:3214px;height:200px;background:#ccc;box-shadow:0 0 80px 0 rgba(0,0,0,0.25)"></div>
</div></body></html>
